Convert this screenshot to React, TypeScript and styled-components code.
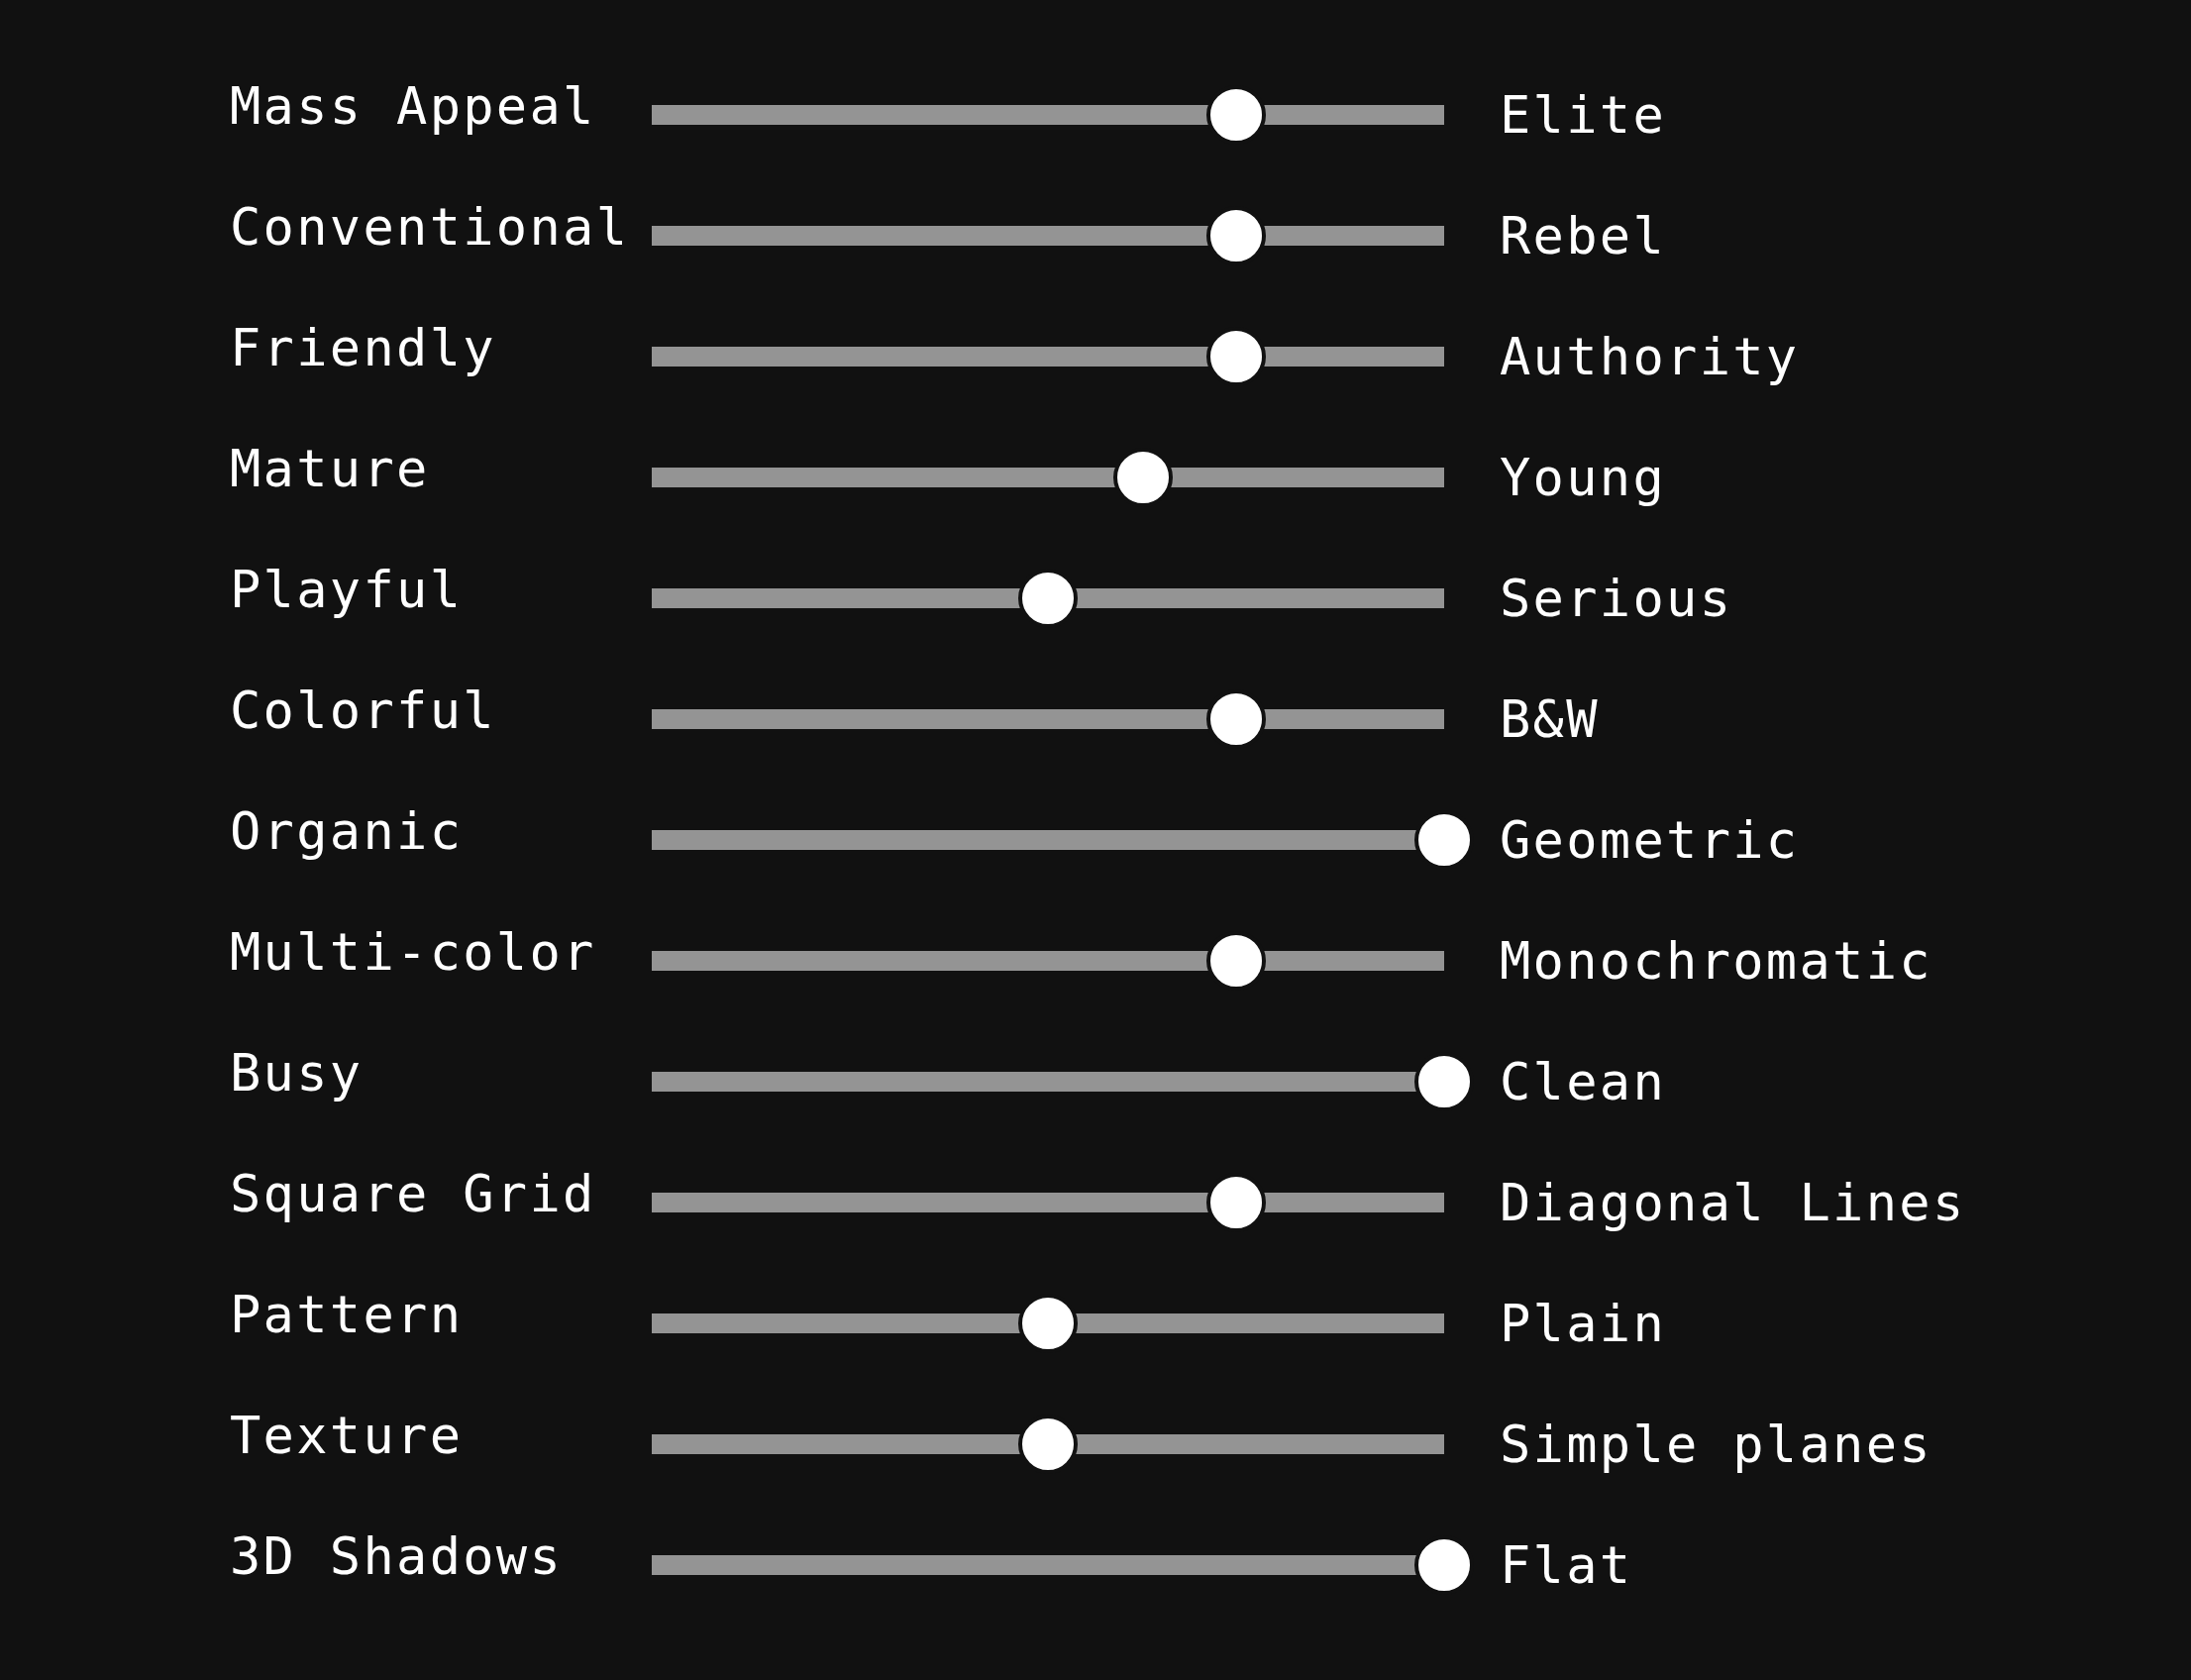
import React from "react";
import styled, { createGlobalStyle } from "styled-components";

const GlobalStyle = createGlobalStyle`
  html, body {
    margin: 0;
    padding: 0;
    background: #111111;
  }
  body {
    font-family: "DejaVu Sans Mono", "Liberation Mono", monospace;
    color: #ffffff;
  }
`;

const Page = styled.main`
  min-height: 1696px;
  box-sizing: border-box;
  padding: 55px 0 0 232px;
  background: #111111;
`;

const List = styled.div`
  display: flex;
  flex-direction: column;
`;

const Row = styled.div`
  display: grid;
  grid-template-columns: 426px 800px 1fr;
  align-items: center;
  height: 122px;
`;

const Label = styled.span<{ $side: "left" | "right" }>`
  font-family: "DejaVu Sans Mono", "Liberation Mono", monospace;
  font-size: 52px;
  letter-spacing: 2.3px;
  line-height: 1;
  color: #ffffff;
  white-space: nowrap;
  padding-bottom: ${(p) => (p.$side === "left" ? "18px" : "0")};
  padding-left: ${(p) => (p.$side === "right" ? "56px" : "0")};
`;

const Track = styled.div`
  position: relative;
  height: 20px;
  background: #949494;
`;

const Thumb = styled.div`
  position: absolute;
  top: 50%;
  width: 52px;
  height: 52px;
  border-radius: 50%;
  background: #ffffff;
  border: 4px solid #111111;
  transform: translate(-50%, -50%);
`;

type Pair = { left: string; right: string; value: number };

const pairs: Pair[] = [
  { left: "Mass Appeal", right: "Elite", value: 73.75 },
  { left: "Conventional", right: "Rebel", value: 73.75 },
  { left: "Friendly", right: "Authority", value: 73.75 },
  { left: "Mature", right: "Young", value: 62 },
  { left: "Playful", right: "Serious", value: 50 },
  { left: "Colorful", right: "B&W", value: 73.75 },
  { left: "Organic", right: "Geometric", value: 100 },
  { left: "Multi-color", right: "Monochromatic", value: 73.75 },
  { left: "Busy", right: "Clean", value: 100 },
  { left: "Square Grid", right: "Diagonal Lines", value: 73.75 },
  { left: "Pattern", right: "Plain", value: 50 },
  { left: "Texture", right: "Simple planes", value: 50 },
  { left: "3D Shadows", right: "Flat", value: 100 },
];

export default function App() {
  return (
    <>
      <GlobalStyle />
      <Page>
        <List>
          {pairs.map((p) => (
            <Row key={p.left}>
              <Label $side="left">{p.left}</Label>
              <Track>
                <Thumb style={{ left: `${p.value}%` }} />
              </Track>
              <Label $side="right">{p.right}</Label>
            </Row>
          ))}
        </List>
      </Page>
    </>
  );
}
